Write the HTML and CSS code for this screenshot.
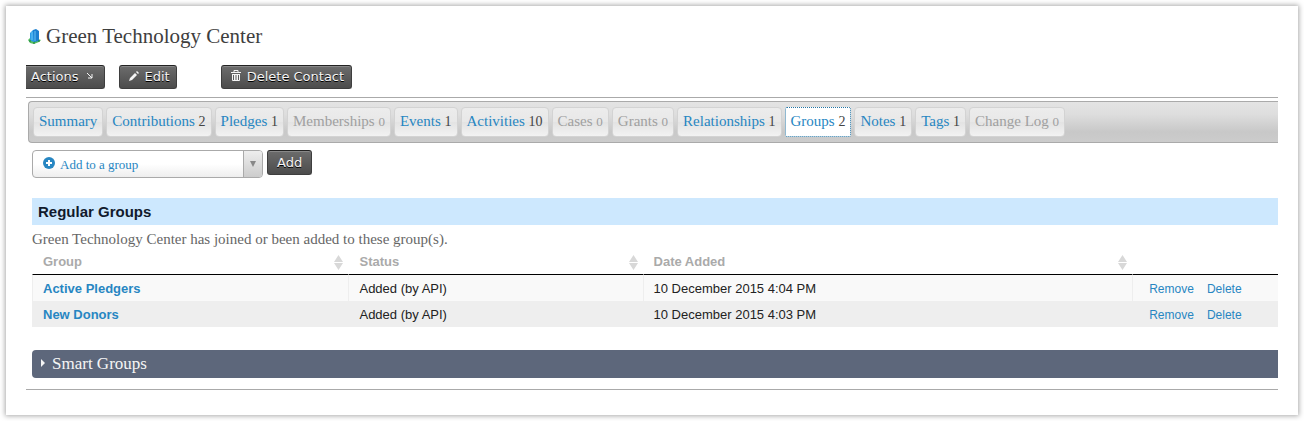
FILE: index.html
```html
<!DOCTYPE html>
<html lang="en">
<head>
<meta charset="utf-8">
<title>Green Technology Center</title>
<link rel="stylesheet" href="styles.css">
</head>
<body>
<main class="card">
  <header class="heading">
    <svg class="org-icon" viewBox="0 0 13 16" aria-hidden="true">
      <path d="M0 12l2-2 3 2 5-1 3 1-2 2-5 2-4-1z" fill="#55bd62"/>
      <path d="M2 5l3-3 1 1v11l-3-1-1-2z" fill="#2a9be6"/>
      <path d="M5 2l3-1 3 2v10l-5 1z" fill="#1a7fd0"/>
      <path d="M4 4v8M7 3v10" stroke="#67c5f5"/>
      <path d="M1 13h2M5 15h2M10 13h2" stroke="#168239"/>
    </svg>
    <h1 class="title">Green Technology Center</h1>
  </header>

  <div class="actions">
    <button class="button button-menu" type="button">Actions
      <svg class="arrow-icon" viewBox="0 0 8 8" aria-hidden="true"><path d="M1 1l5 5M6 2v4H2" fill="none" stroke="currentColor"/></svg>
    </button>
    <button class="button button-edit" type="button">
      <svg class="button-icon" viewBox="0 0 12 12" aria-hidden="true"><path d="M1 11l1-3 5-5 2 2-5 5zM8 2l1-1 2 2-1 1z" fill="currentColor"/></svg>
      Edit</button>
    <button class="button button-delete" type="button">
      <svg class="button-icon" viewBox="0 0 12 12" aria-hidden="true"><path d="M1 2.500h10M4 2V.5h4V2M2.500 4v6.500h7V4M2 4.500h8M4.500 4v6M6 4v6M7.500 4v6" fill="none" stroke="currentColor"/></svg>
      Delete Contact</button>
  </div>

  <section class="record">
    <nav class="tabs" aria-label="Contact sections">
      <a class="tab" href="#summary">Summary</a>
      <a class="tab" href="#contributions">Contributions <span class="count">2</span></a>
      <a class="tab" href="#pledges">Pledges <span class="count">1</span></a>
      <a class="tab tab-empty" href="#memberships">Memberships <span class="count">0</span></a>
      <a class="tab" href="#events">Events <span class="count">1</span></a>
      <a class="tab" href="#activities">Activities <span class="count">10</span></a>
      <a class="tab tab-empty" href="#cases">Cases <span class="count">0</span></a>
      <a class="tab tab-empty" href="#grants">Grants <span class="count">0</span></a>
      <a class="tab" href="#relationships">Relationships <span class="count">1</span></a>
      <a class="tab tab-current" href="#groups" aria-current="page">Groups <span class="count">2</span></a>
      <a class="tab" href="#notes">Notes <span class="count">1</span></a>
      <a class="tab" href="#tags">Tags <span class="count">1</span></a>
      <a class="tab tab-empty" href="#log">Change Log <span class="count">0</span></a>
    </nav>

    <div class="panel" id="groups">
      <form class="add-form">
        <div class="picker">
          <svg class="plus-icon" viewBox="0 0 12 12" aria-hidden="true"><circle cx="6" cy="6" r="6" fill="#2786c2"/><path d="M6 3v6M3 6h6" stroke="#fff" stroke-width="2"/></svg>
          <select class="picker-select" aria-label="Add to a group"><option>Add to a group</option></select>
          <span class="picker-arrow"><svg class="down-icon" viewBox="0 0 6 6" aria-hidden="true"><path d="M0 0h6L3 6z" fill="currentColor"/></svg></span>
        </div>
        <button class="button button-add" type="button">Add</button>
      </form>

      <h2 class="section-title">Regular Groups</h2>
      <p class="description">Green Technology Center has joined or been added to these group(s).</p>

      <table class="groups">
        <colgroup><col class="col-group"><col class="col-status"><col class="col-date"><col></colgroup>
        <thead>
          <tr>
            <th scope="col"><div class="sortable">Group <svg class="sort-icon" viewBox="0 0 9 15" aria-hidden="true"><path d="M0 7l4.500-7L9 7zM0 8h9l-4.500 7z" fill="currentColor"/></svg></div></th>
            <th scope="col"><div class="sortable">Status <svg class="sort-icon" viewBox="0 0 9 15" aria-hidden="true"><path d="M0 7l4.500-7L9 7zM0 8h9l-4.500 7z" fill="currentColor"/></svg></div></th>
            <th scope="col"><div class="sortable">Date Added <svg class="sort-icon" viewBox="0 0 9 15" aria-hidden="true"><path d="M0 7l4.500-7L9 7zM0 8h9l-4.500 7z" fill="currentColor"/></svg></div></th>
            <td></td>
          </tr>
        </thead>
        <tbody>
          <tr>
            <td><a class="group-link" href="#active">Active Pledgers</a></td>
            <td>Added (by API)</td>
            <td>10 December 2015 4:04 PM</td>
            <td><div class="row-actions"><a href="#remove">Remove</a><a href="#delete">Delete</a></div></td>
          </tr>
          <tr>
            <td><a class="group-link" href="#donors">New Donors</a></td>
            <td>Added (by API)</td>
            <td>10 December 2015 4:03 PM</td>
            <td><div class="row-actions"><a href="#remove">Remove</a><a href="#delete">Delete</a></div></td>
          </tr>
        </tbody>
      </table>

      <button class="accordion" type="button" aria-expanded="false">
        <svg class="expand-icon" viewBox="0 0 4 8" aria-hidden="true"><path d="M0 0l4 4-4 4z" fill="currentColor"/></svg>
        Smart Groups</button>
    </div>
  </section>
</main>
</body>
</html>
```
FILE: styles.css
```css
* { box-sizing: border-box; }
body {
  margin: 0;
  padding: 6px;
  background: #fff;
  color: #222;
  font-family: "Liberation Serif", serif;
}
a { color: #2786c2; text-decoration: none; }
svg { display: block; flex: none; }

.card {
  padding: 16px 20px 25px;
  background: #fff;
  box-shadow: 0 0 5px 1px #aaa;
}
.heading { display: flex; align-items: center; gap: 5px; height: 28px; padding-left: 2px; }
.org-icon { width: 13px; height: 16px; }
.title { margin: 0; color: #3e3e3e; font-size: 21px; font-weight: 400; line-height: 28px; }

.actions { display: flex; padding: 15px 0 8px; }
.button {
  display: flex;
  align-items: center;
  height: 24px;
  padding: 0 5px;
  border: 1px solid #3e3e3e;
  border-top-color: #222;
  border-radius: 3px;
  background: linear-gradient(#6c6c6c, #4c4c4c);
  box-shadow: inset 0 1px #888;
  color: #f5f5f5;
  font-family: "DejaVu Sans", sans-serif;
  font-size: 13px;
  line-height: 20px;
  text-shadow: 0 1px #000;
}
.button-menu { gap: 7px; padding-right: 10px; border-left: 0; border-radius: 0 3px 3px 0; }
.button-edit { gap: 5px; padding-left: 8px; padding-right: 6px; margin-left: 14px; }
.button-delete { gap: 5px; padding-left: 8px; padding-right: 7px; margin-left: 44px; }
.arrow-icon { width: 8px; height: 8px; margin-bottom: 3px; }
.button-icon { width: 12px; height: 12px; margin-bottom: 3px; }

.record { border: solid #aaa; border-width: 1px 0; padding: 3px 0 11px 2px; }
.tabs {
  display: flex;
  gap: 3px;
  height: 42px;
  padding: 5px 4px;
  border: 1px solid #aaa;
  border-right: 0;
  border-radius: 4px 0 0 4px;
  background: linear-gradient(#e4e4e4, #dedede 30%, #c8c8c8 75%, #ccc);
}
.tab {
  height: 30px;
  padding: 0 5px;
  border: 1px solid #d3d3d3;
  border-radius: 4px;
  background: linear-gradient(#ececec, #e8e8e8 50%, #e3e3e3 51%, #f2f2f2);
  font-size: 15px;
  line-height: 27px;
  white-space: nowrap;
}
.count { color: #444; font-size: 14px; }
.tab-empty, .tab-empty .count { color: #a0a0a0; }
.tab-empty .count { font-size: 13px; }
.tab-current { border: 1px dotted #2274a4; border-radius: 2px; background: #fff; }

.panel { padding: 7px 0 0 4px; }
.add-form { display: flex; gap: 4px; }
.picker {
  display: flex;
  align-items: center;
  width: 231px;
  height: 28px;
  padding-left: 10px;
  border: 1px solid #aaa;
  border-radius: 4px;
  background: linear-gradient(#fff 50%, #eee);
}
.plus-icon { width: 12px; height: 12px; margin-bottom: 2px; }
.picker-select {
  flex: 1;
  min-width: 0;
  padding: 0 5px;
  border: 0;
  appearance: none;
  background: transparent;
  color: #2786c2;
  font-family: "Liberation Serif", serif;
  font-size: 13px;
}
.picker-arrow {
  display: flex;
  align-items: center;
  justify-content: center;
  align-self: stretch;
  width: 19px;
  border-left: 1px solid #aaa;
  border-radius: 0 3px 3px 0;
  background: linear-gradient(#eee, #ccc);
  color: #888;
}
.down-icon { width: 6px; height: 6px; }
.button-add { padding: 0 9px; height: 25px; }

.section-title {
  margin: 20px 0 0;
  padding: 0 6px;
  background: #cde8fe;
  color: #111a2c;
  font: bold 15px/27px "Liberation Sans", sans-serif;
}
.description { margin: 4px 0 0; color: #666; font-size: 15px; line-height: 20px; }

.groups {
  width: 100%;
  table-layout: fixed;
  border-collapse: separate;
  border-spacing: 0;
  font: 13px/16px "Liberation Sans", sans-serif;
}
.col-group { width: 25.4%; }
.col-status { width: 23.6%; }
.col-date { width: 39.3%; }
.groups th, .groups td { padding: 6px 5px 4px 10px; border-left: 1px solid #eee; text-align: left; }
.groups thead th, .groups thead td { padding-top: 5px; border-left-color: #fff; border-bottom: 1px solid #000; color: #aaa; }
.groups tbody tr:first-child { background: #f9f9f9; }
.groups tbody tr:last-child { background: #eee; }
.sortable { display: flex; align-items: center; justify-content: space-between; }
.sort-icon { width: 9px; height: 15px; color: #d8d8d8; }
.group-link { font-weight: 700; }
.row-actions { display: flex; gap: 13px; padding-left: 6px; font-size: 12px; }

.accordion {
  display: flex;
  align-items: center;
  gap: 7px;
  width: 100%;
  height: 28px;
  margin-top: 23px;
  padding: 0 9px;
  border: 0;
  border-radius: 4px 0 0 4px;
  background: #5d677b;
  color: #f5f5f5;
  font: 17px/28px "Liberation Serif", serif;
}
.expand-icon { width: 4px; height: 8px; margin-bottom: 3px; }
```
